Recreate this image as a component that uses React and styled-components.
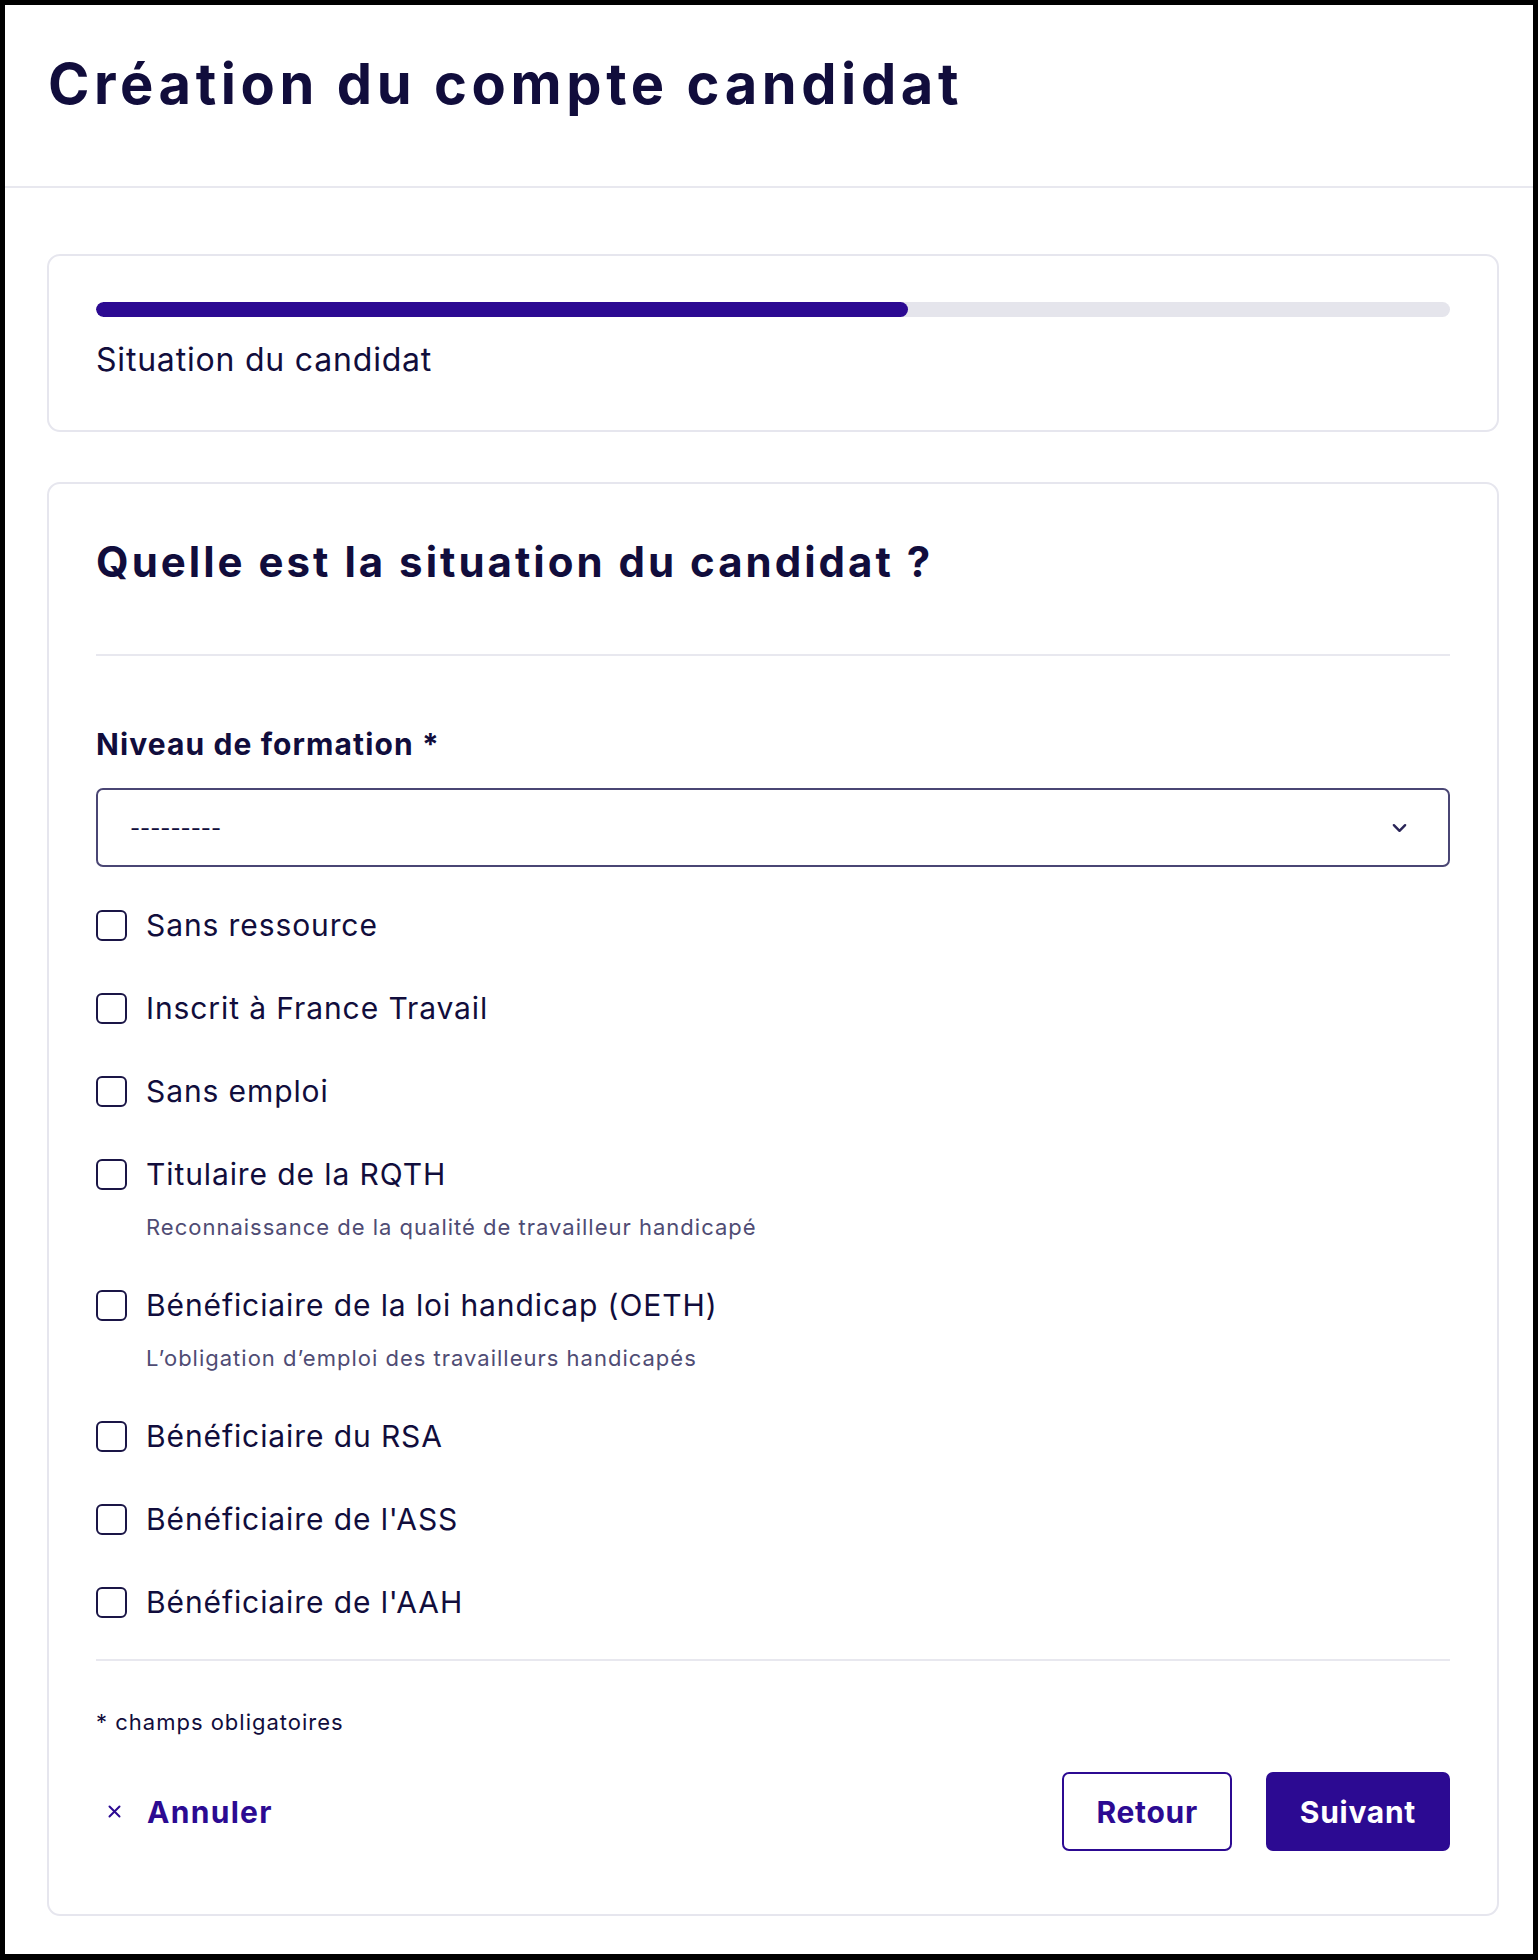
import React from 'react'
import styled, { createGlobalStyle } from 'styled-components'

const GlobalStyle = createGlobalStyle`
    * { box-sizing: border-box; }
    body {
        margin: 0;
        background: #000;
        font-family: Inter, "Noto Sans", sans-serif;
        color: #110d3c;
    }
`

const situations = [
    { id: 'sans-ressource', label: 'Sans ressource' },
    { id: 'france-travail', label: 'Inscrit à France Travail' },
    { id: 'sans-emploi', label: 'Sans emploi' },
    { id: 'rqth', label: 'Titulaire de la RQTH', hint: 'Reconnaissance de la qualité de travailleur handicapé' },
    { id: 'oeth', label: 'Bénéficiaire de la loi handicap (OETH)', hint: 'L\u2019obligation d\u2019emploi des travailleurs handicapés' },
    { id: 'rsa', label: 'Bénéficiaire du RSA' },
    { id: 'ass', label: "Bénéficiaire de l'ASS" },
    { id: 'aah', label: "Bénéficiaire de l'AAH" },
]

function App() {
    return (
        <>
            <GlobalStyle />
            <StFrame>
                <StPage>
                    <StHeader>
                        <StTitle>Création du compte candidat</StTitle>
                    </StHeader>
                    <StMain>
                        <StCard>
                            <StTrack>
                                <StFill $percent={60} />
                            </StTrack>
                            <StStepLabel>Situation du candidat</StStepLabel>
                        </StCard>

                        <StFormCard>
                            <StHeading>Quelle est la situation du candidat ?</StHeading>
                            <StDivider />

                            <StFieldLabel htmlFor="niveau">Niveau de formation *</StFieldLabel>
                            <StSelectWrap>
                                <StSelect id="niveau" defaultValue="">
                                    <option value="">---------</option>
                                </StSelect>
                                <StChevron viewBox="0 0 16 10" aria-hidden="true">
                                    <path d="M2 2l6 6 6-6" fill="none" stroke="currentColor" strokeWidth="2.6" strokeLinecap="round" strokeLinejoin="round" />
                                </StChevron>
                            </StSelectWrap>

                            <StCheckList>
                                {situations.map((item) => (
                                    <li key={item.id}>
                                        <StCheckRow>
                                            <StBox type="checkbox" id={item.id} />
                                            <StCheckText htmlFor={item.id}>{item.label}</StCheckText>
                                        </StCheckRow>
                                        {item.hint && <StHint>{item.hint}</StHint>}
                                    </li>
                                ))}
                            </StCheckList>

                            <StDivider $bottom />
                            <StRequired>* champs obligatoires</StRequired>

                            <StActions>
                                <StCancel type="button">
                                    <svg width="13" height="13" viewBox="0 0 13 13" aria-hidden="true">
                                        <path d="M1.5 1.5l10 10M11.5 1.5l-10 10" stroke="currentColor" strokeWidth="2" strokeLinecap="round" />
                                    </svg>
                                    Annuler
                                </StCancel>
                                <StButtonGroup>
                                    <StButton type="button" $variant="secondary">Retour</StButton>
                                    <StButton type="submit">Suivant</StButton>
                                </StButtonGroup>
                            </StActions>
                        </StFormCard>
                    </StMain>
                </StPage>
            </StFrame>
        </>
    )
}

export default App

const StFrame = styled.div`
    padding: 5px 5px 6px 5px;
`
const StPage = styled.div`
    background: #fff;
    min-height: 1949px;
`
const StHeader = styled.header`
    height: 183px;
    padding: 45px 0 0 43px;
    border-bottom: 2px solid #e8e8ef;
`
const StTitle = styled.h1`
    margin: 0;
    font-size: 56px;
    line-height: 68px;
    font-weight: 700;
    letter-spacing: 4.6px;
    color: #110d3c;
`
const StMain = styled.main`
    padding: 66px 34px 0 42px;
    display: flex;
    flex-direction: column;
    gap: 50px;
`
const StCard = styled.section`
    border: 2px solid #e6e6ee;
    border-radius: 13px;
    padding: 46px 47px 50px;
`
const StTrack = styled.div`
    height: 15px;
    border-radius: 8px;
    background: #e5e5ec;
    overflow: hidden;
`
const StFill = styled.div`
    height: 100%;
    width: ${(p) => p.$percent}%;
    border-radius: 8px;
    background: #2c0a92;
`
const StStepLabel = styled.p`
    margin: 23px 0 0;
    font-size: 32px;
    line-height: 40px;
    letter-spacing: 0.8px;
    color: #110d3c;
`
const StFormCard = styled.form`
    border: 2px solid #e6e6ee;
    border-radius: 13px;
    padding: 53px 47px 63px;
    display: flex;
    flex-direction: column;
`
const StHeading = styled.h2`
    margin: 0;
    font-size: 42px;
    line-height: 50px;
    font-weight: 700;
    letter-spacing: 3px;
    color: #110d3c;
`
const StDivider = styled.hr`
    margin: ${(p) => (p.$bottom ? '38px 0 47px' : '67px 0 69px')};
    border: 0;
    height: 2px;
    background: #e8e8ef;
`
const StFieldLabel = styled.label`
    font-size: 30px;
    line-height: 38px;
    font-weight: 700;
    letter-spacing: 1.1px;
    color: #110d3c;
`
const StSelectWrap = styled.div`
    position: relative;
    margin-top: 25px;
`
const StSelect = styled.select`
    width: 100%;
    height: 79px;
    padding: 0 60px 0 32px;
    appearance: none;
    border: 2px solid #4a4674;
    border-radius: 7px;
    background: #fff;
    font-family: inherit;
    font-size: 22px;
    color: #110d3c;
`
const StChevron = styled.svg`
    position: absolute;
    right: 43px;
    top: 35px;
    width: 15px;
    height: 10px;
    color: #2a2558;
    pointer-events: none;
`
const StCheckList = styled.ul`
    list-style: none;
    margin: 39px 0 0;
    padding: 0;
    display: flex;
    flex-direction: column;
    gap: 45px;
`
const StCheckRow = styled.div`
    display: flex;
    align-items: center;
    gap: 19px;
    height: 38px;
`
const StBox = styled.input`
    appearance: none;
    margin: 0;
    width: 31px;
    height: 31px;
    flex-shrink: 0;
    border: 2px solid #1a1546;
    border-radius: 6px;
    background: #fff;
`
const StCheckText = styled.label`
    font-size: 30px;
    line-height: 38px;
    letter-spacing: 0.9px;
    color: #110d3c;
`
const StHint = styled.p`
    margin: 20px 0 0 50px;
    font-size: 22px;
    line-height: 28px;
    letter-spacing: 1px;
    color: #4f4c74;
`
const StRequired = styled.p`
    margin: 0;
    font-size: 22px;
    line-height: 28px;
    letter-spacing: 1px;
    color: #110d3c;
`
const StActions = styled.div`
    margin-top: 36px;
    display: flex;
    align-items: center;
    justify-content: space-between;
`
const StCancel = styled.button`
    display: flex;
    align-items: center;
    gap: 26px;
    padding: 0 0 0 12px;
    border: 0;
    background: none;
    font-family: inherit;
    font-size: 30px;
    font-weight: 700;
    letter-spacing: 1.3px;
    color: #2c0a92;
    cursor: pointer;
`
const StButtonGroup = styled.div`
    display: flex;
    gap: 34px;
`
const StButton = styled.button`
    height: 79px;
    padding: 0 32px;
    border: 2px solid #2c0a92;
    border-radius: 7px;
    background: ${(p) => (p.$variant === 'secondary' ? '#fff' : '#2c0a92')};
    color: ${(p) => (p.$variant === 'secondary' ? '#2c0a92' : '#fff')};
    font-family: inherit;
    font-size: 30px;
    font-weight: 700;
    letter-spacing: 0.7px;
    cursor: pointer;
`
